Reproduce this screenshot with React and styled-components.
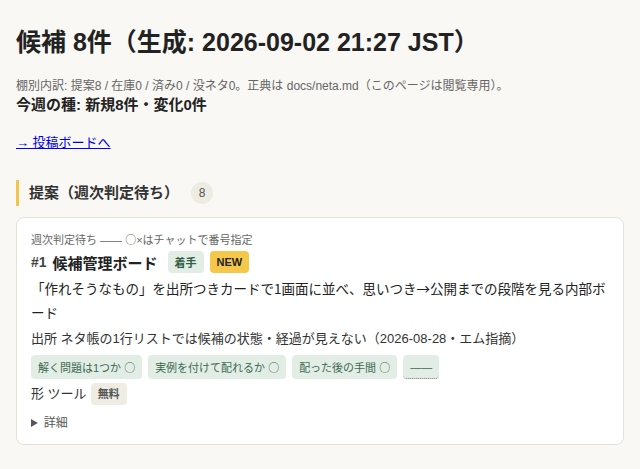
import React from 'react'
import styled, { createGlobalStyle } from 'styled-components'

const GlobalStyle = createGlobalStyle`
  body {
    margin: 0;
    background: #f9f8f4;
    font-family: "Liberation Sans", "Noto Sans CJK JP", sans-serif;
    color: #222;
  }
`

const checks = ['解く問題は1つか', '実例を付けて配れるか', '配った後の手間']

function App() {
  return (
    <Page>
      <GlobalStyle />
      <Title>候補 8件（生成: 2026-09-02 21:27 JST）</Title>
      <Sub>棚別内訳: 提案8 / 在庫0 / 済み0 / 没ネタ0。正典は docs/neta.md（このページは閲覧専用）。</Sub>
      <Week>今週の種: 新規8件・変化0件</Week>
      <BoardLink href="#">→ 投稿ボードへ</BoardLink>

      <SectionHead>
        <span>提案（週次判定待ち）</span>
        <Count>8</Count>
      </SectionHead>

      <Card>
        <Meta>
          週次判定待ち —— <Jp>○</Jp>×はチャットで番号指定
        </Meta>
        <CardTitle>
          <Num>#1</Num>
          <Name>候補管理ボード</Name>
          <Badge $tone="green">着手</Badge>
          <Badge $tone="yellow">NEW</Badge>
        </CardTitle>
        <Desc>「作れそうなもの」を出所つきカードで1画面に並べ、思いつき→公開までの段階を見る内部ボード</Desc>
        <Source>出所 ネタ帳の1行リストでは候補の状態・経過が見えない（2026-08-28・エム指摘）</Source>
        <Chips>
          {checks.map((c) => (
            <Chip key={c}>
              {c} <Jp>○</Jp>
            </Chip>
          ))}
          <Chip $empty>——</Chip>
        </Chips>
        <Shape>
          形 ツール <Badge $tone="gray">無料</Badge>
        </Shape>
        <Details>
          <summary>詳細</summary>
        </Details>
      </Card>
    </Page>
  )
}

const Page = styled.div`
  padding: 22px 16px 24px;
`

const Jp = styled.span`
  font-family: "Noto Sans CJK JP", sans-serif;
  line-height: 1;
`

const Title = styled.h1`
  margin: 0 0 16px;
  font-size: 25px;
  line-height: 40px;
  font-weight: 700;
  color: #222;
`

const Sub = styled.p`
  margin: 0 0 1px;
  font-size: 12px;
  line-height: 16px;
  color: #666;
`

const Week = styled.p`
  margin: 0 0 18px;
  font-size: 15px;
  line-height: 20px;
  font-weight: 700;
  color: #222;
`

const BoardLink = styled.a`
  display: inline-block;
  font-size: 13px;
  line-height: 20px;
  color: #0000ee;
  text-decoration: underline;
`

const SectionHead = styled.h2`
  display: flex;
  align-items: center;
  gap: 12px;
  margin: 27px 0 11px;
  padding-left: 10px;
  border-left: 3px solid #f3c64b;
  font-size: 15px;
  line-height: 26px;
  font-weight: 700;
  color: #333;
`

const Count = styled.span`
  display: inline-flex;
  align-items: center;
  justify-content: center;
  min-width: 22px;
  height: 22px;
  border-radius: 11px;
  background: #eeebe3;
  font-size: 12px;
  font-weight: 400;
  color: #555;
`

const Card = styled.div`
  background: #fff;
  border: 1px solid #e4e1d6;
  border-radius: 8px;
  padding: 14px 14px 12px;
`

const Meta = styled.div`
  font-size: 11px;
  line-height: 16px;
  color: #666;
`

const CardTitle = styled.div`
  display: flex;
  align-items: center;
  gap: 6px;
  margin-top: 3px;
  font-weight: 700;
  color: #222;
`

const Num = styled.span`
  font-size: 14px;
  color: #444;
`

const Name = styled.span`
  font-size: 15px;
  margin-right: 4px;
`

const tones = {
  green: { bg: '#e2ede6', fg: '#2f5e43' },
  yellow: { bg: '#f5c84c', fg: '#222' },
  gray: { bg: '#efece4', fg: '#555' },
}

const Badge = styled.span`
  display: inline-flex;
  align-items: center;
  height: 22px;
  padding: 0 7px;
  border-radius: 4px;
  background: ${(p) => tones[p.$tone].bg};
  color: ${(p) => tones[p.$tone].fg};
  font-size: 11px;
  font-weight: 700;
`

const Desc = styled.p`
  margin: 3px 0 5px;
  font-family: "Noto Sans CJK JP", sans-serif;
  font-size: 13.5px;
  line-height: 24px;
  color: #222;
`

const Source = styled.p`
  margin: 0 0 6px;
  font-size: 13px;
  line-height: 20px;
  color: #333;
`

const Chips = styled.div`
  display: flex;
  flex-wrap: wrap;
  gap: 6px;
`

const Chip = styled.span`
  display: inline-flex;
  align-items: center;
  gap: 3px;
  height: 24px;
  padding: 0 7px;
  border-radius: 4px;
  background: #e2ede6;
  color: #3d6a51;
  font-size: 11px;
  border-bottom: ${(p) => (p.$empty ? '1px dotted #777' : 'none')};
  box-sizing: border-box;
`

const Shape = styled.div`
  display: flex;
  align-items: center;
  gap: 4px;
  margin-top: 4px;
  font-size: 13px;
  line-height: 22px;
  color: #333;
`

const Details = styled.details`
  margin-top: 9px;
  font-size: 12px;
  line-height: 18px;
  color: #555;
  summary {
    cursor: pointer;
  }
`

export default App
